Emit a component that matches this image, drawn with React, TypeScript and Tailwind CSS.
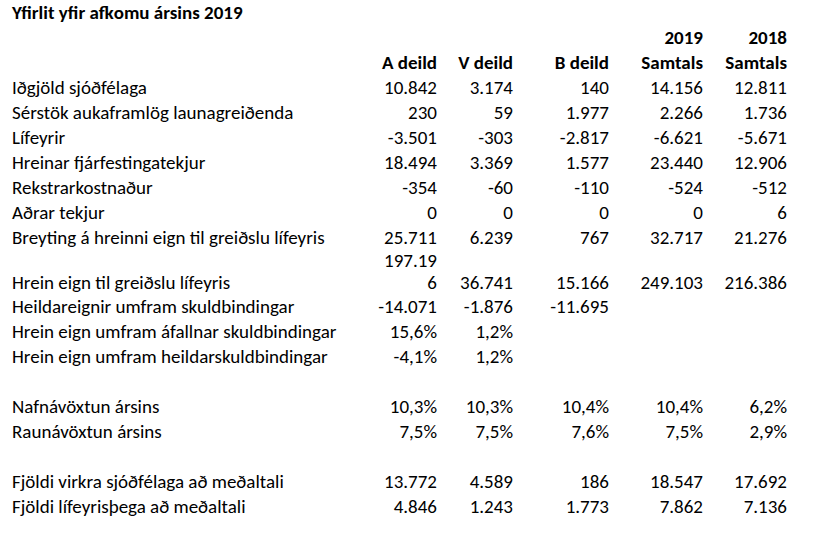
const rowsTop: string[][] = [
  ['Iðgjöld sjóðfélaga', '10.842', '3.174', '140', '14.156', '12.811'],
  ['Sérstök aukaframlög launagreiðenda', '230', '59', '1.977', '2.266', '1.736'],
  ['Lífeyrir', '-3.501', '-303', '-2.817', '-6.621', '-5.671'],
  ['Hreinar fjárfestingatekjur', '18.494', '3.369', '1.577', '23.440', '12.906'],
  ['Rekstrarkostnaður', '-354', '-60', '-110', '-524', '-512'],
  ['Aðrar tekjur', '0', '0', '0', '0', '6'],
  ['Breyting á hreinni eign til greiðslu lífeyris', '25.711', '6.239', '767', '32.717', '21.276'],
]

const rowsMid: string[][] = [
  ['Heildareignir umfram skuldbindingar', '-14.071', '-1.876', '-11.695', '', ''],
  ['Hrein eign umfram áfallnar skuldbindingar', '15,6%', '1,2%', '', '', ''],
  ['Hrein eign umfram heildarskuldbindingar', '-4,1%', '1,2%', '', '', ''],
]

const rowsReturn: string[][] = [
  ['Nafnávöxtun ársins', '10,3%', '10,3%', '10,4%', '10,4%', '6,2%'],
  ['Raunávöxtun ársins', '7,5%', '7,5%', '7,6%', '7,5%', '2,9%'],
]

const rowsCount: string[][] = [
  ['Fjöldi virkra sjóðfélaga að meðaltali', '13.772', '4.589', '186', '18.547', '17.692'],
  ['Fjöldi lífeyrisþega að meðaltali', '4.846', '1.243', '1.773', '7.862', '7.136'],
]

const grid = 'grid grid-cols-[345px_80px_76px_96px_94px_84px] items-center h-[25px]'

function Row({ cells, bold }: { cells: string[]; bold?: boolean }) {
  return (
    <div className={`${grid} ${bold ? 'font-bold' : ''}`}>
      {cells.map((c, i) => (
        <div key={i} className={i === 0 ? 'whitespace-nowrap' : 'text-right whitespace-nowrap'}>
          {c}
        </div>
      ))}
    </div>
  )
}

function Blank() {
  return <div className="h-[25px]" />
}

export default function App() {
  return (
    <div
      className="w-[825px] h-[544px] bg-white pl-[12px] text-black text-[19px] leading-[22px] overflow-hidden"
      style={{ fontFamily: 'Carlito, Lato, "Liberation Sans", sans-serif' }}
    >
      <div className="h-[25px] flex items-center font-bold whitespace-nowrap">
        Yfirlit yfir afkomu ársins 2019
      </div>
      <Row bold cells={['', '', '', '', '2019', '2018']} />
      <Row bold cells={['', 'A deild', 'V deild', 'B deild', 'Samtals', 'Samtals']} />
      {rowsTop.map((r) => (
        <Row key={r[0]} cells={r} />
      ))}
      <div className="grid grid-cols-[345px_80px_76px_96px_94px_84px] items-end h-[44px]">
        <div className="whitespace-nowrap">Hrein eign til greiðslu lífeyris</div>
        <div className="text-right flex flex-col items-end">
          <span>197.19</span>
          <span>6</span>
        </div>
        <div className="text-right">36.741</div>
        <div className="text-right">15.166</div>
        <div className="text-right">249.103</div>
        <div className="text-right">216.386</div>
      </div>
      {rowsMid.map((r) => (
        <Row key={r[0]} cells={r} />
      ))}
      <Blank />
      {rowsReturn.map((r) => (
        <Row key={r[0]} cells={r} />
      ))}
      <Blank />
      {rowsCount.map((r) => (
        <Row key={r[0]} cells={r} />
      ))}
    </div>
  )
}
